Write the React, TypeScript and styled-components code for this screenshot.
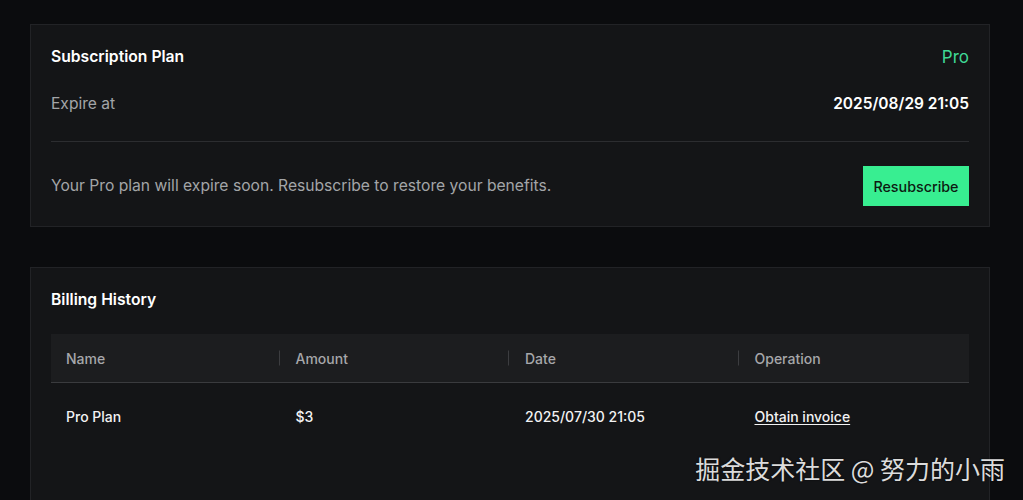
import { FunctionComponent } from 'react';
import styled, { createGlobalStyle } from 'styled-components';

const GlobalStyle = createGlobalStyle`
  html, body {
    margin: 0;
    padding: 0;
    background: #0b0c0e;
  }

  body {
    font-family: Inter, 'Noto Sans', sans-serif;
    color: #ffffff;
    -webkit-font-smoothing: antialiased;
  }
`;

const Page = styled.div`
  position: relative;
  height: 100vh;
  overflow: hidden;
  box-sizing: border-box;
  padding: 24px 33px 0 30px;
  display: flex;
  flex-direction: column;
  gap: 40px;
`;

// $grow: card fills the rest of the viewport and runs off its bottom edge
const Card = styled.section<{ $grow?: boolean }>`
  flex: ${({ $grow }) => ($grow ? '1 0 auto' : '0 0 auto')};
  background: #141517;
  border: 1px solid #222326;
  border-bottom-width: ${({ $grow }) => ($grow ? 0 : '1px')};
  padding: 20px;
  display: flex;
  flex-direction: column;
`;

const Row = styled.div<{ $gap?: number }>`
  display: flex;
  align-items: center;
  justify-content: space-between;
  margin-top: ${({ $gap }) => $gap ?? 0}px;
`;

const Title = styled.h2`
  margin: 0;
  font-size: 15.7px;
  line-height: 24px;
  font-weight: 600;
  color: #ffffff;
`;

const PlanName = styled.span`
  font-size: 17px;
  line-height: 24px;
  color: #3fd895;
`;

const Label = styled.span`
  font-size: 15.6px;
  line-height: 24px;
  color: #a3a5a8;
`;

const Value = styled.span`
  font-size: 15.5px;
  line-height: 24px;
  font-weight: 600;
  color: #ffffff;
`;

const Divider = styled.hr`
  border: none;
  border-top: 1px solid #2c2d30;
  margin: 25px 0 0;
`;

const Notice = styled.p`
  margin: 0;
  font-size: 15.65px;
  line-height: 24px;
  color: #a3a5a8;
`;

const PrimaryButton = styled.button`
  height: 40px;
  padding: 0 10.5px;
  border: none;
  border-radius: 0;
  background: #38ee91;
  color: #0d1a12;
  font-family: inherit;
  font-size: 14.3px;
  font-weight: 500;
  cursor: pointer;
`;

const Table = styled.table`
  width: 100%;
  margin-top: 22px;
  border-collapse: collapse;
  table-layout: fixed;
`;

const HeadCell = styled.th<{ $divider?: boolean }>`
  position: relative;
  height: 48px;
  padding: 0 15px;
  background: #1c1d1f;
  border-bottom: 1px solid #3a3b3e;
  text-align: left;
  font-size: 14px;
  font-weight: 500;
  color: #a6a7aa;

  &::after {
    content: '';
    display: ${({ $divider }) => ($divider ? 'block' : 'none')};
    position: absolute;
    right: 1px;
    top: 50%;
    width: 1px;
    height: 15px;
    transform: translateY(-50%);
    background: #3c3d40;
  }
`;

const Cell = styled.td`
  height: 66px;
  padding: 0 15px;
  font-size: 14px;
  font-weight: 500;
  color: #f2f2f3;
`;

const InvoiceLink = styled.a`
  color: #f2f2f3;
  text-decoration: underline;
  text-underline-offset: 2px;
  cursor: pointer;
`;

const Watermark = styled.span`
  position: absolute;
  right: 18px;
  bottom: 16px;
  font-family: 'Noto Sans CJK SC', 'Noto Sans', sans-serif;
  font-size: 25px;
  line-height: 32px;
  color: #dcdcdc;
  text-shadow: 0 0 2px rgba(0, 0, 0, 0.6);
  pointer-events: none;
`;

const columns = ['Name', 'Amount', 'Date', 'Operation'];

const invoices = [
  { name: 'Pro Plan', amount: '$3', date: '2025/07/30 21:05' },
];

const SubscriptionCard: FunctionComponent = () => (
  <Card>
    <Row>
      <Title>Subscription Plan</Title>
      <PlanName>Pro</PlanName>
    </Row>
    <Row $gap={23}>
      <Label>Expire at</Label>
      <Value>2025/08/29 21:05</Value>
    </Row>
    <Divider />
    <Row $gap={24}>
      <Notice>
        Your Pro plan will expire soon. Resubscribe to restore your benefits.
      </Notice>
      <PrimaryButton>Resubscribe</PrimaryButton>
    </Row>
  </Card>
);

const BillingCard: FunctionComponent = () => (
  <Card $grow>
    <Title>Billing History</Title>
    <Table>
      <thead>
        <tr>
          {columns.map((col, index) => (
            <HeadCell key={col} $divider={index < columns.length - 1}>
              {col}
            </HeadCell>
          ))}
        </tr>
      </thead>
      <tbody>
        {invoices.map((item) => (
          <tr key={item.date}>
            <Cell>{item.name}</Cell>
            <Cell>{item.amount}</Cell>
            <Cell>{item.date}</Cell>
            <Cell>
              <InvoiceLink>Obtain invoice</InvoiceLink>
            </Cell>
          </tr>
        ))}
      </tbody>
    </Table>
  </Card>
);

const App: FunctionComponent = () => {
  return (
    <>
      <GlobalStyle />
      <Page>
        <SubscriptionCard />
        <BillingCard />
        <Watermark>掘金技术社区 @ 努力的小雨</Watermark>
      </Page>
    </>
  );
};

export default App;
